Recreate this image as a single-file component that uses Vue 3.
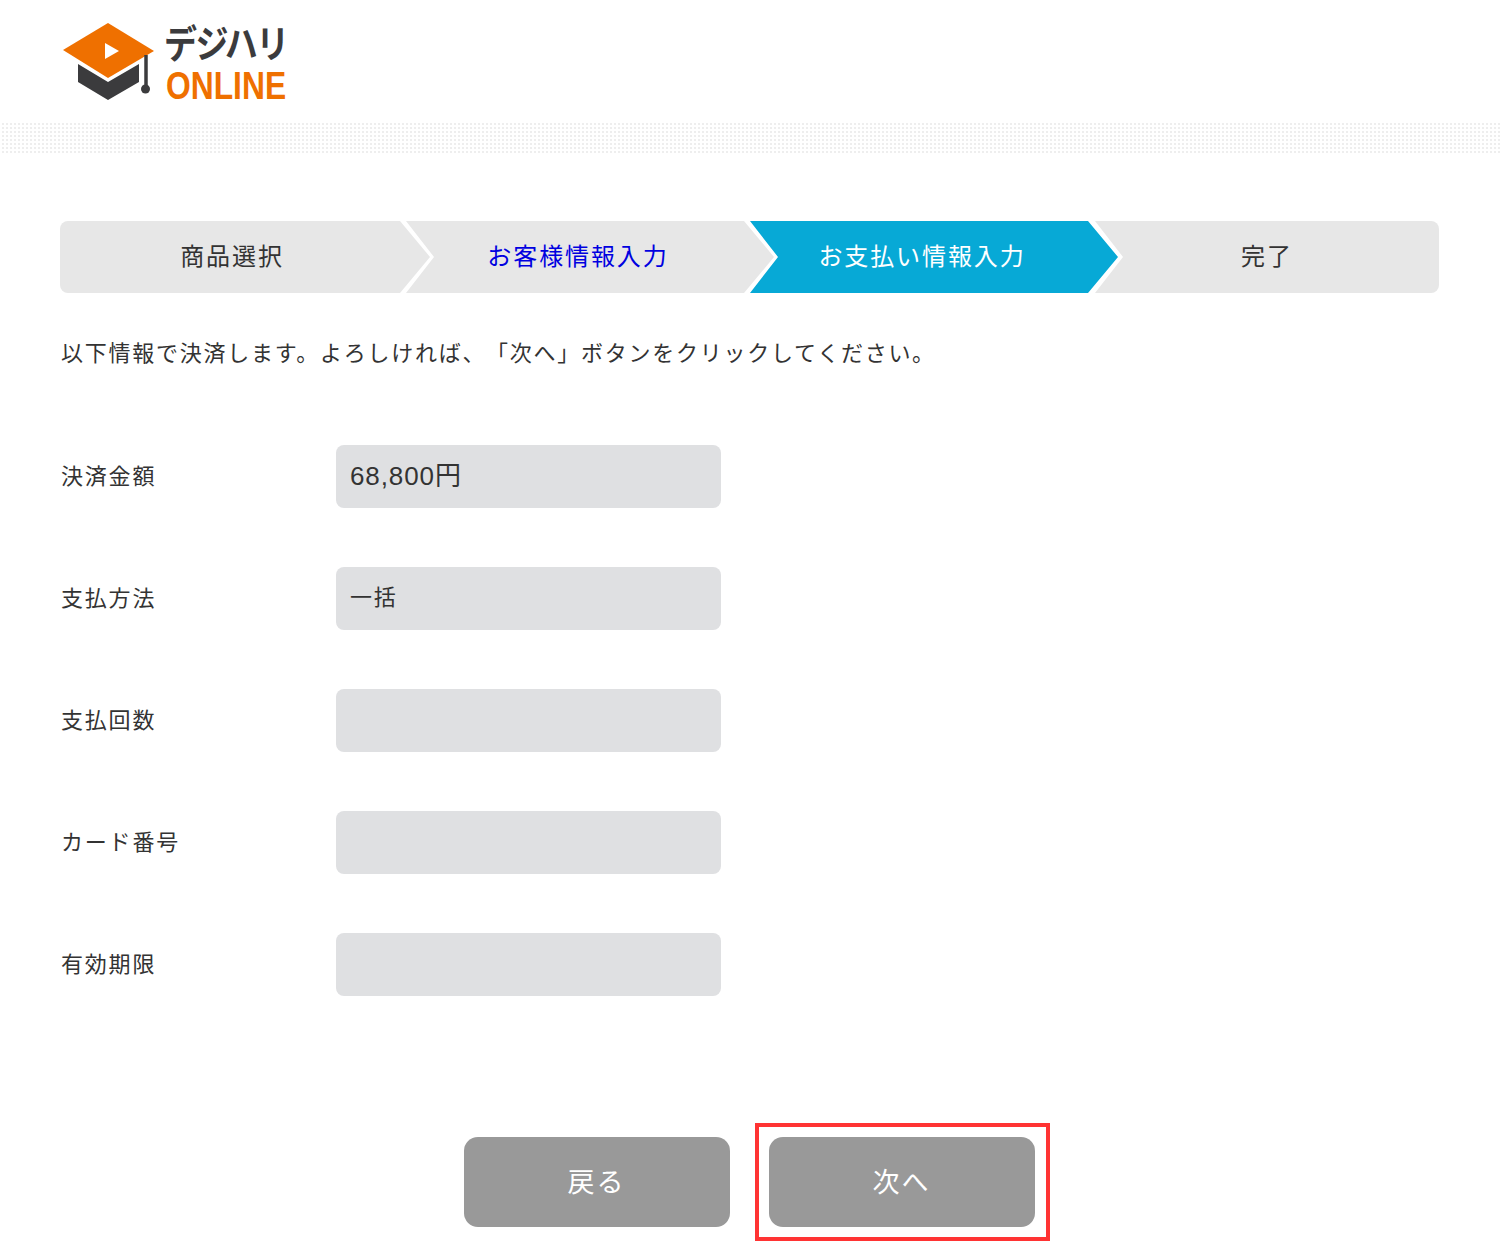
<template>
  <div class="page">
    <!-- ヘッダー -->
    <header class="header">
      <svg class="logo-mark" width="98" height="84" viewBox="0 0 98 84" xmlns="http://www.w3.org/2000/svg">
        <path d="M16 42L46 60L77 42V60L46 78L16 60Z" fill="#3b3b3d" />
        <path d="M1 28L46 1L92 29L46 56Z" fill="#ef7000" />
        <path d="M43 21L57 29L43 37Z" fill="#fff" />
        <path d="M84 33V66" stroke="#3b3b3d" stroke-width="3.5" fill="none" />
        <circle cx="83.5" cy="67" r="4.5" fill="#3b3b3d" />
      </svg>
      <div class="logo-text">
        <span class="logo-jp">デジハリ</span>
        <span class="logo-en">ONLINE</span>
      </div>
    </header>
    <div class="band"></div>

    <main class="main">
      <!-- ステップ -->
      <ol class="steps">
        <li
          v-for="step in steps"
          :key="step.label"
          class="step"
          :class="step.state"
        >
          <span class="step-label">{{ step.label }}</span>
        </li>
      </ol>

      <p class="message">以下情報で決済します。よろしければ、「次へ」ボタンをクリックしてください。</p>

      <!-- 入力内容 -->
      <div class="form">
        <div v-for="row in rows" :key="row.label" class="form-row">
          <div class="form-label">{{ row.label }}</div>
          <div class="form-value" :class="{ amount: row.amount }">{{ row.value }}</div>
        </div>
      </div>

      <div class="actions">
        <button class="action-btn" type="button">戻る</button>
        <div class="next-wrap">
          <button class="action-btn" type="button">次へ</button>
          <div class="highlight"></div>
        </div>
      </div>
    </main>
  </div>
</template>

<script setup>
const steps = [
  { label: "商品選択", state: "first" },
  { label: "お客様情報入力", state: "link" },
  { label: "お支払い情報入力", state: "active" },
  { label: "完了", state: "last" },
];

const rows = [
  { label: "決済金額", value: "68,800円", amount: true },
  { label: "支払方法", value: "一括" },
  { label: "支払回数", value: "" },
  { label: "カード番号", value: "" },
  { label: "有効期限", value: "" },
];
</script>

<style scoped>
* {
  box-sizing: border-box;
}

.page {
  width: 1500px;
  height: 1259px;
  overflow: hidden;
  background: #fff;
  color: #333;
  font-family: "Liberation Sans", "Noto Sans CJK JP", sans-serif;
  text-spacing-trim: space-all;
}

/* ヘッダー */
.header {
  height: 122px;
  padding: 22px 0 0 62px;
  display: flex;
  align-items: flex-start;
}

.logo-mark {
  flex: none;
}

.logo-text {
  margin-left: 4px;
  display: flex;
  flex-direction: column;
  width: 130px;
}

.logo-jp {
  height: 46px;
  font-size: 33px;
  line-height: 46px;
  font-weight: 700;
  letter-spacing: -1.6px;
  color: #3b3b3d;
  white-space: nowrap;
  transform: scaleY(1.16);
  transform-origin: left center;
}

.logo-en {
  display: block;
  height: 36px;
  margin-left: 2px;
  font-size: 39px;
  line-height: 36px;
  font-weight: 700;
  color: #ef7000;
  transform: scaleX(0.815);
  transform-origin: left center;
  white-space: nowrap;
}

.band {
  height: 33px;
  background-color: #eeeeee;
  background-image:
    repeating-linear-gradient(90deg, #fff 0 2px, transparent 2px 4px),
    repeating-linear-gradient(0deg, #fff 0 2px, transparent 2px 4px);
}

.main {
  padding: 66px 61px 0 60px;
}

/* ステップ */
.steps {
  list-style: none;
  margin: 0;
  padding: 0;
  display: flex;
}

.step {
  flex: none;
  width: 368px;
  height: 72px;
  margin-left: -24px;
  padding-bottom: 6px;
  background: #e7e7e7;
  display: flex;
  align-items: center;
  clip-path: polygon(0 0, calc(100% - 30px) 0, 100% 50%, calc(100% - 30px) 100%, 0 100%, 28px 50%);
}

.step-label {
  width: 344px;
  text-align: center;
  font-size: 24px;
  letter-spacing: 1.9px;
}

.step.first {
  width: 370px;
  margin-left: 0;
  border-radius: 8px 0 0 8px;
  clip-path: polygon(0 0, calc(100% - 30px) 0, 100% 50%, calc(100% - 30px) 100%, 0 100%);
}

.step.link {
  color: #0000e0;
}

.step.active {
  background: #07a9d6;
  color: #fff;
}

.step.last {
  width: 344px;
  margin-left: -23px;
  border-radius: 0 8px 8px 0;
  clip-path: polygon(0 0, 100% 0, 100% 100%, 0 100%, 28px 50%);
}

.message {
  margin: 46px 0 0 1px;
  font-size: 22px;
  line-height: 30px;
  letter-spacing: 1.74px;
}

/* 入力内容 */
.form {
  margin-top: 76px;
  display: flex;
  flex-direction: column;
  gap: 59px;
}

.form-row {
  display: flex;
  align-items: center;
}

.form-label {
  width: 276px;
  padding: 0 0 6px 1px;
  font-size: 22px;
  letter-spacing: 1.8px;
}

.form-value {
  width: 385px;
  height: 63px;
  padding: 0 14px 7px;
  border-radius: 8px;
  background: #dfe0e2;
  display: flex;
  align-items: center;
  font-size: 22px;
  letter-spacing: 1.8px;
}

.form-value.amount {
  font-size: 26px;
  letter-spacing: 0.9px;
}

/* ボタン */
.actions {
  margin: 141px 0 0 -61px;
  width: 1500px;
  display: flex;
  justify-content: center;
  gap: 39px;
}

.next-wrap {
  position: relative;
}

.action-btn {
  display: block;
  width: 266px;
  height: 90px;
  padding: 0 0 4px;
  border: none;
  border-radius: 14px;
  background: #999;
  color: #fff;
  font-family: inherit;
  font-size: 27px;
  letter-spacing: 2px;
}

.highlight {
  position: absolute;
  top: -14px;
  left: -14px;
  right: -15px;
  bottom: -14px;
  border: 4px solid #ff3333;
}
</style>
